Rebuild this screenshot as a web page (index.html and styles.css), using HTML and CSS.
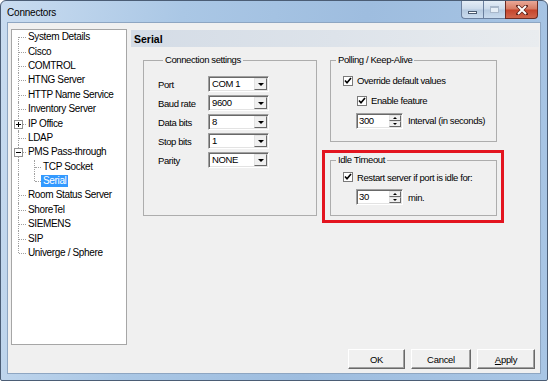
FILE: index.html
```html
<!DOCTYPE html>
<html lang="en">
<head>
  <meta charset="UTF-8" />
  <title>Connectors</title>
  <link rel="stylesheet" href="styles.css">
</head>
<body>
  <div class="window">
    <div class="titlebar">
      <span class="title">Connectors</span>
      <div class="caption">
        <span class="cap cap-min"><i></i></span>
        <span class="cap cap-max"><i></i></span>
        <span class="cap cap-close">
          <svg width="12" height="10" viewBox="0 0 12 10">
            <path d="M2 1 L10 9 M10 1 L2 9" stroke="#5a2018" stroke-width="3.4" stroke-linecap="square"/>
            <path d="M2 1 L10 9 M10 1 L2 9" stroke="#fff" stroke-width="2"/>
          </svg>
        </span>
      </div>
    </div>

    <div class="client">
      <div class="main">
        <div class="tree">
          <div class="node"><span class="stem first"></span><span class="label">System Details</span></div>
          <div class="node"><span class="stem"></span><span class="label">Cisco</span></div>
          <div class="node"><span class="stem"></span><span class="label">COMTROL</span></div>
          <div class="node"><span class="stem"></span><span class="label">HTNG Server</span></div>
          <div class="node"><span class="stem"></span><span class="label">HTTP Name Service</span></div>
          <div class="node"><span class="stem"></span><span class="label">Inventory Server</span></div>
          <div class="node"><span class="stem"><span class="toggle plus"></span></span><span class="label">IP Office</span></div>
          <div class="node"><span class="stem"></span><span class="label">LDAP</span></div>
          <div class="node"><span class="stem"><span class="toggle"></span></span><span class="label">PMS Pass-through</span></div>
          <div class="node"><span class="pass"></span><span class="stem sub"></span><span class="label">TCP Socket</span></div>
          <div class="node"><span class="pass"></span><span class="stem sub last"></span><span class="label selected">Serial</span></div>
          <div class="node"><span class="stem"></span><span class="label">Room Status Server</span></div>
          <div class="node"><span class="stem"></span><span class="label">ShoreTel</span></div>
          <div class="node"><span class="stem"></span><span class="label">SIEMENS</span></div>
          <div class="node"><span class="stem"></span><span class="label">SIP</span></div>
          <div class="node"><span class="stem last"></span><span class="label">Univerge / Sphere</span></div>
        </div>

        <div class="pane">
          <div class="pane-header">Serial</div>
          <div class="pane-body">
            <fieldset class="group conn">
              <legend>Connection settings</legend>
              <div class="fields">
                <span>Port</span>
                <span class="combo"><span class="combo-val">COM 1</span><span class="drop"></span></span>
                <span>Baud rate</span>
                <span class="combo"><span class="combo-val">9600</span><span class="drop"></span></span>
                <span>Data bits</span>
                <span class="combo"><span class="combo-val">8</span><span class="drop"></span></span>
                <span>Stop bits</span>
                <span class="combo"><span class="combo-val">1</span><span class="drop"></span></span>
                <span>Parity</span>
                <span class="combo"><span class="combo-val">NONE</span><span class="drop"></span></span>
              </div>
            </fieldset>

            <div class="side">
              <fieldset class="group polling">
                <legend>Polling / Keep-Alive</legend>
                <div class="opts">
                  <label class="check"><span class="box"><svg width="8" height="8" viewBox="0 0 8 8"><path d="M1 3.5 L3 5.8 L7 1" fill="none" stroke="#000" stroke-width="1.6"/></svg></span>Override default values</label>
                  <label class="check indent"><span class="box"><svg width="8" height="8" viewBox="0 0 8 8"><path d="M1 3.5 L3 5.8 L7 1" fill="none" stroke="#000" stroke-width="1.6"/></svg></span>Enable feature</label>
                  <div class="spin-row">
                    <span class="spin"><span class="spin-val">300</span><span class="spin-btns"><i class="up"></i><i class="down"></i></span></span>
                    <span>Interval (in seconds)</span>
                  </div>
                </div>
              </fieldset>

              <div class="callout">
                <fieldset class="group idle">
                  <legend>Idle Timeout</legend>
                  <div class="opts">
                    <label class="check"><span class="box"><svg width="8" height="8" viewBox="0 0 8 8"><path d="M1 3.5 L3 5.8 L7 1" fill="none" stroke="#000" stroke-width="1.6"/></svg></span>Restart server if port is idle for:</label>
                    <div class="spin-row">
                      <span class="spin"><span class="spin-val">30</span><span class="spin-btns"><i class="up"></i><i class="down"></i></span></span>
                      <span>min.</span>
                    </div>
                  </div>
                </fieldset>
              </div>
            </div>
          </div>
        </div>
      </div>

      <div class="footer">
        <button class="btn ok">OK</button>
        <button class="btn cancel">Cancel</button>
        <button class="btn apply"><u>A</u>pply</button>
      </div>
    </div>
  </div>
</body>
</html>
```

FILE: styles.css
```css
* {
  box-sizing: border-box;
}
body {
  margin: 0;
  background: #fff;
  font-family: 'Liberation Sans', Arial, sans-serif;
  color: #000;
}
.window {
  width: 548px;
  height: 381px;
  border: 1px solid #4b5d75;
  border-radius: 6px 6px 2px 2px;
  background: linear-gradient(100deg, #c9dcf0 0%, #aac7e5 30%, #9ebddf 60%, #a9c6e5 100%);
  padding: 0 6px 6px;
  display: flex;
  flex-direction: column;
}

/* title bar */
.titlebar {
  height: 21px;
  display: flex;
  align-items: center;
}
.title {
  font-size: 10px;
  letter-spacing: -0.2px;
  margin-top: 2px;
}
.caption {
  margin-left: auto;
  margin-right: 3px;
  align-self: flex-start;
  display: flex;
  height: 18px;
}
.cap {
  height: 18px;
  display: flex;
  align-items: center;
  justify-content: center;
  border: 1px solid #6a7f9e;
  border-top: none;
  background: linear-gradient(#e4edf6, #cbdaeb 48%, #b5c9df 52%, #c9dbee);
}
.cap-min {
  width: 22px;
  border-radius: 0 0 0 4px;
  border-right: none;
}
.cap-min i {
  width: 9px;
  height: 3px;
  margin-top: 5px;
  background: #fff;
  border: 1px solid #4a5a70;
}
.cap-max {
  width: 22px;
  border-right: none;
}
.cap-max i {
  width: 9px;
  height: 7px;
  border: 1px solid #a9b8cb;
  border-top-width: 2px;
  background: #e6eef6;
}
.cap-close {
  width: 33px;
  border-color: #6b2b22;
  border-radius: 0 0 4px 0;
  background: linear-gradient(#e9a898, #d57a62 48%, #c5432a 52%, #d0664c);
}

/* client area */
.client {
  flex: 1;
  border: 1px solid #8ea6c2;
  background: #f0f0f0;
  display: flex;
  flex-direction: column;
  padding: 6px 1px 4px 3px;
}
.main {
  flex: 1;
  display: flex;
  gap: 4px;
  min-height: 0;
}

/* tree */
.tree {
  width: 116px;
  background: #fff;
  border: 1px solid #a6a6a6;
  font-size: 10px;
  letter-spacing: -0.35px;
}
.node {
  display: flex;
  align-items: center;
  height: 14.4px;
}
.stem,
.pass {
  position: relative;
  align-self: stretch;
  flex: none;
}
.stem {
  width: 14px;
}
.pass {
  width: 16px;
}
.stem::before,
.pass::before {
  content: '';
  position: absolute;
  left: 6px;
  top: 0;
  bottom: 0;
  border-left: 1px dotted #a0a0a0;
}
.stem::after {
  content: '';
  position: absolute;
  left: 7px;
  top: 50%;
  width: 7px;
  border-top: 1px dotted #a0a0a0;
}
.stem.first::before {
  top: 50%;
}
.stem.last::before {
  bottom: 50%;
}
.stem.sub {
  width: 13px;
}
.stem.sub::after {
  width: 6px;
}
.toggle {
  position: absolute;
  left: 2px;
  top: 50%;
  margin-top: -4px;
  width: 9px;
  height: 9px;
  border: 1px solid #929292;
  background: #fff;
  z-index: 1;
}
.toggle::before {
  content: '';
  position: absolute;
  left: 1px;
  top: 3px;
  width: 5px;
  height: 1px;
  background: #000;
}
.toggle.plus::after {
  content: '';
  position: absolute;
  left: 3px;
  top: 1px;
  width: 1px;
  height: 5px;
  background: #000;
}
.label {
  padding: 0 2px;
  line-height: 12px;
  white-space: nowrap;
}
.label.selected {
  background: #3399ff;
  color: #fff;
}

/* right pane */
.pane {
  flex: 1;
  padding-top: 1px;
  font-size: 9.5px;
  letter-spacing: -0.4px;
}
.pane-header {
  height: 17px;
  padding-left: 3px;
  display: flex;
  align-items: center;
  font-size: 10.5px;
  font-weight: bold;
  letter-spacing: 0;
  background: linear-gradient(to right, #d4dce6, #dde3ea 50%, #e9ecef);
}
.pane-body {
  display: flex;
  align-items: flex-start;
  gap: 13px;
  padding: 7px 0 0 12px;
}
.group {
  margin: 0;
  padding: 0;
  min-width: 0;
  border: 1px solid #adadad;
}
.group legend {
  padding: 0 2px;
  margin-left: 5px;
  line-height: 12px;
}
.conn {
  width: 174px;
  height: 162px;
  padding: 10px 0 0 14px;
}
.fields {
  display: grid;
  grid-template-columns: 50px 61px;
  grid-auto-rows: 16px;
  row-gap: 3px;
  align-items: center;
}
.combo {
  height: 16px;
  display: flex;
  background: #fff;
  border: 1px solid;
  border-color: #a0a0a0 #fff #fff #a0a0a0;
  box-shadow: inset 1px 1px 0 #696969, inset -1px -1px 0 #e3e3e3;
  padding: 1px;
}
.combo-val {
  flex: 1;
  padding-left: 2px;
  line-height: 12px;
}
.drop {
  width: 13px;
  background: #f0f0f0;
  border: 1px solid;
  border-color: #e3e3e3 #696969 #696969 #e3e3e3;
  position: relative;
}
.drop::after {
  content: '';
  position: absolute;
  left: 3px;
  top: 4px;
  border-left: 3px solid transparent;
  border-right: 3px solid transparent;
  border-top: 3px solid #000;
}

.side {
  width: 167px;
  display: flex;
  flex-direction: column;
}
.polling {
  height: 88px;
}
.opts {
  display: flex;
  flex-direction: column;
  padding-left: 12px;
}
.polling .opts {
  padding-top: 8px;
}
.idle .opts {
  padding-top: 4.5px;
}
.check {
  display: flex;
  align-items: center;
  height: 13px;
  white-space: nowrap;
}
.check.indent {
  margin: 7px 0 0 14px;
}
.box {
  width: 10px;
  height: 10px;
  margin-right: 4px;
  background: #fff;
  border: 1px solid #7a7a7a;
  display: flex;
  align-items: center;
  justify-content: center;
  flex: none;
}
.spin-row {
  display: flex;
  align-items: center;
  gap: 5px;
  margin: 5.5px 0 0 13px;
}
.spin {
  width: 47px;
  height: 16px;
  display: flex;
  background: #fff;
  border: 1px solid;
  border-color: #a0a0a0 #fff #fff #a0a0a0;
  box-shadow: inset 1px 1px 0 #696969, inset -1px -1px 0 #e3e3e3;
  padding: 1px;
}
.spin-val {
  flex: 1;
  padding-left: 1px;
  line-height: 12px;
}
.spin-btns {
  width: 12px;
  display: flex;
  flex-direction: column;
}
.spin-btns i {
  flex: 1;
  background: #f0f0f0;
  border: 1px solid;
  border-color: #e3e3e3 #696969 #696969 #e3e3e3;
  position: relative;
}
.spin-btns i::after {
  content: '';
  position: absolute;
  left: 3px;
  top: 1px;
  border-left: 2px solid transparent;
  border-right: 2px solid transparent;
}
.spin-btns .up::after {
  border-bottom: 2px solid #000;
}
.spin-btns .down::after {
  border-top: 2px solid #000;
}
.callout {
  margin: 8px -7px 0 -8px;
  border: 3px solid #e3141f;
  padding: 1px 4px 4px 5px;
}
.idle {
  height: 62px;
}

/* buttons */
.footer {
  display: flex;
  justify-content: flex-end;
  gap: 6px;
  padding: 4px 4px 0 0;
}
.btn {
  height: 20px;
  font-family: inherit;
  font-size: 9.5px;
  letter-spacing: -0.3px;
  color: #000;
  background: #f0f0f0;
  border: 1px solid;
  border-color: #fff #696969 #696969 #fff;
  box-shadow: inset -1px -1px 0 #a0a0a0;
  padding: 0;
}
.btn.ok {
  width: 57px;
}
.btn.cancel {
  width: 60px;
}
.btn.apply {
  width: 58px;
}
```
